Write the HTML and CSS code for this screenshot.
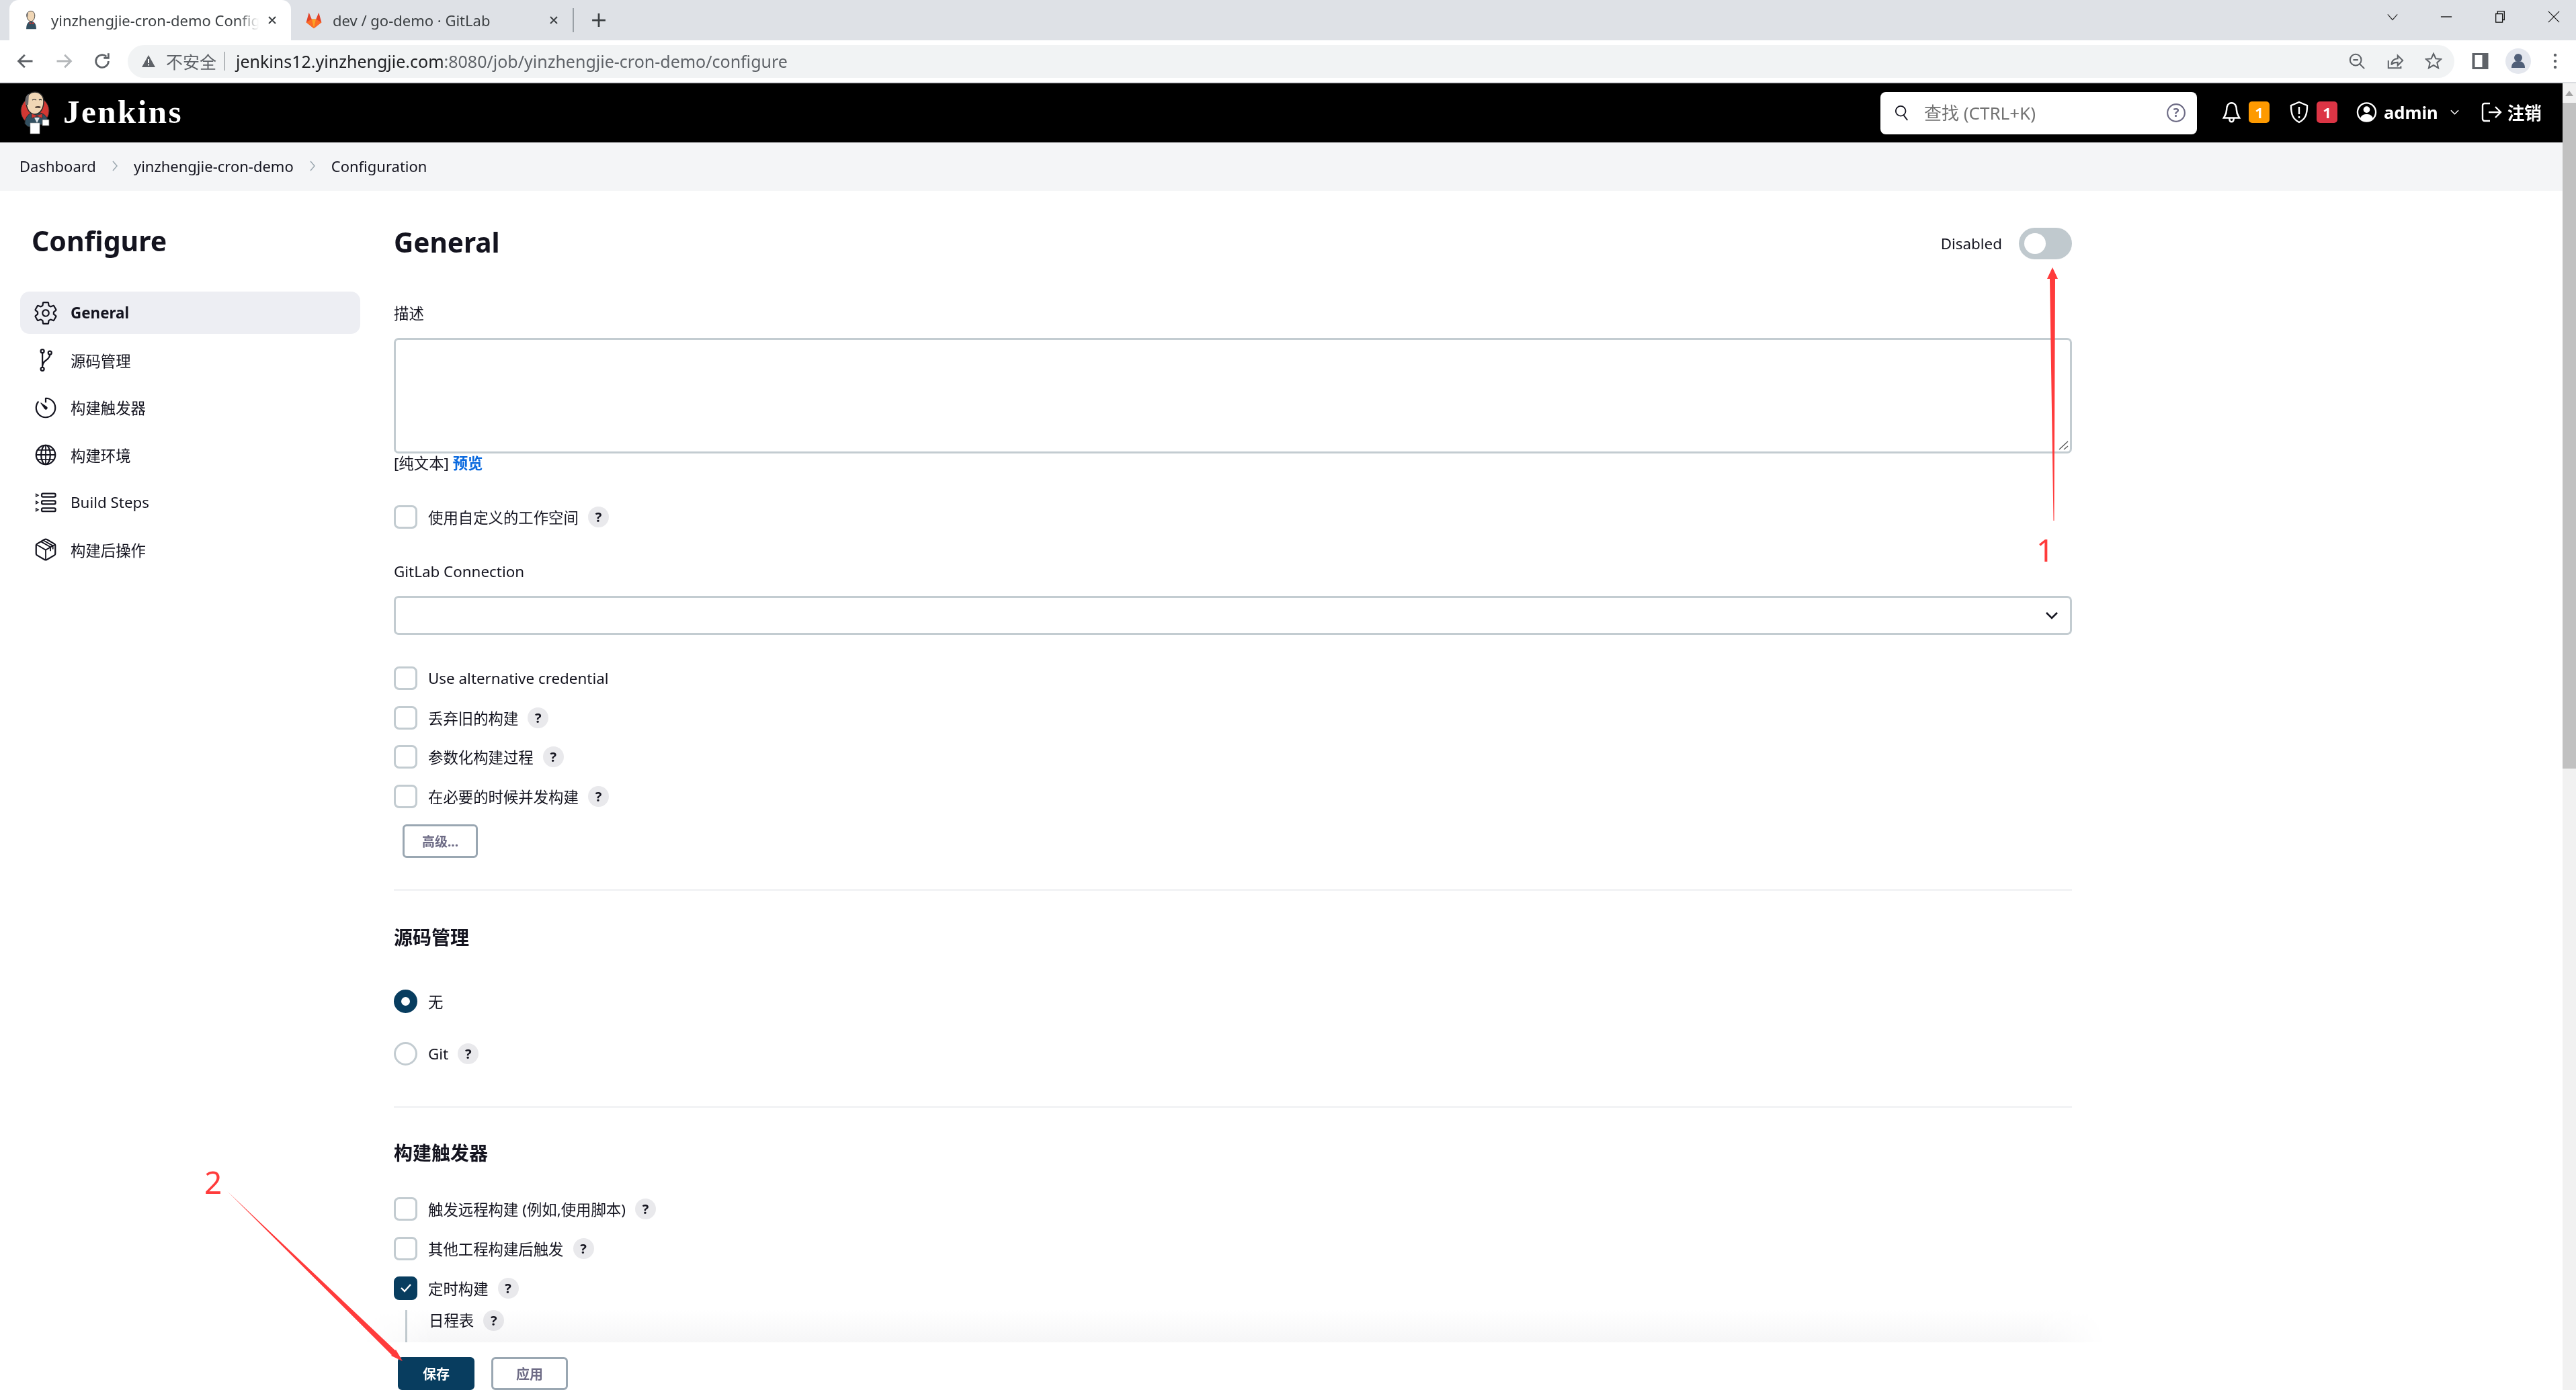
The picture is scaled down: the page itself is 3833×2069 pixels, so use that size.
FILE: index.html
```html
<!DOCTYPE html>
<html lang="en">
<head>
    <meta charset="UTF-8">
    <title>yinzhengjie-cron-demo Config - Jenkins</title>
    <link rel="stylesheet" href="styles.css">
</head>
<body>
    <div class="tabstrip">
        <div class="tab tab-active">
            <svg class="favicon" viewBox="0 0 46 64">
                <path d="M6 62c0-16 6-26 17-26s17 10 17 26z" fill="#335061"/>
                <path d="M8 16C8 6 15 1 22 1s13 6 13 15c0 11-5 20-13 20S8 27 8 16z" fill="#f0d6b5" stroke="#2b2b2b" stroke-width="2"/>
                <path d="M7 20c-2-8 1-14 5-15l-1 15z" fill="#6d6b6d"/>
                <path d="M17 38l7 4 7-4v8l-7-3-7 3z" fill="#d33833"/>
            </svg>
            <span class="tab-title">yinzhengjie-cron-demo Config</span>
            <svg class="tab-close" viewBox="0 0 14 14"><path d="M2 2l10 10M12 2L2 12" stroke="#3c4043" stroke-width="2"/></svg>
        </div>
        <div class="tab">
            <svg class="favicon favicon-gitlab" viewBox="0 0 30 32"><path d="M15 31L1 20 6 2l5 12h8l5-12 5 18z" fill="#e24329"/><path d="M15 31L1 20l10-6z" fill="#fc6d26"/><path d="M15 31l14-11-10-6z" fill="#fc6d26"/><path d="M15 31l-4-17h8z" fill="#fca326"/></svg>
            <span class="tab-title">dev / go-demo · GitLab</span>
            <svg class="tab-close" viewBox="0 0 14 14"><path d="M2 2l10 10M12 2L2 12" stroke="#3c4043" stroke-width="2"/></svg>
        </div>
        <span class="tab-sep"></span>
        <svg class="tab-new" viewBox="0 0 20 20"><path d="M10 1v18M1 10h18" stroke="#3c4043" stroke-width="2.5"/></svg>
        <div class="window-btns">
            <svg viewBox="0 0 20 20"><path d="M2 6l8 9 8-9" fill="none" stroke="#333" stroke-width="1.3"/></svg>
            <svg viewBox="0 0 20 20"><path d="M1 10h18" stroke="#111" stroke-width="1.5"/></svg>
            <svg viewBox="0 0 20 20"><path d="M3 5h11v14H3zM6 5V1h11v14h-3" fill="none" stroke="#111" stroke-width="1.4"/></svg>
            <svg viewBox="0 0 20 20"><path d="M1 1l18 18M19 1L1 19" stroke="#111" stroke-width="1.2"/></svg>
        </div>
    </div>

    <div class="toolbar">
        <svg class="nav-icon" viewBox="0 0 24 24"><path d="M21 12H4M11 4l-8 8 8 8" fill="none" stroke="#5f6368" stroke-width="2.4"/></svg>
        <svg class="nav-icon" viewBox="0 0 24 24"><path d="M3 12h17M13 4l8 8-8 8" fill="none" stroke="#b4b7ba" stroke-width="2.4"/></svg>
        <svg class="nav-icon" viewBox="0 0 24 24"><path d="M20 12a8 8 0 1 1-2.500-5.800M20 2v6h-6" fill="none" stroke="#5f6368" stroke-width="2.4"/></svg>
        <div class="omnibox">
            <svg class="warn-icon" viewBox="0 0 22 20"><path d="M11 1l10 18H1z" fill="#5f6368"/><path d="M10 7h2v6h-2zM10 14.500h2v2h-2z" fill="#fff"/></svg>
            <span class="not-secure">不安全</span>
            <span class="omni-sep"></span>
            <span class="url"><b>jenkins12.yinzhengjie.com</b>:8080/job/yinzhengjie-cron-demo/configure</span>
            <span class="omni-actions">
                <svg viewBox="0 0 28 28"><circle cx="12" cy="12" r="9" fill="none" stroke="#5f6368" stroke-width="2.2"/><path d="M8 12h8M18 18l8 8" stroke="#5f6368" stroke-width="2.2"/></svg>
                <svg viewBox="0 0 28 28"><path d="M3 13v12h20v-3" fill="none" stroke="#5f6368" stroke-width="2.2"/><path d="M8 20c0-7 5-10 10-10V5l8 8-8 8v-5c-4 0-8 0-10 4z" fill="none" stroke="#5f6368" stroke-width="2.2"/></svg>
                <svg viewBox="0 0 28 28"><path d="M14 2l3.600 8 8.400.8-6.300 5.600 1.900 8.600-7.600-4.500L6.400 25l1.900-8.600L2 10.800l8.400-.8z" fill="none" stroke="#5f6368" stroke-width="2.2"/></svg>
            </span>
        </div>
        <div class="toolbar-right">
            <svg class="panel-icon" viewBox="0 0 24 24"><path d="M0 0h24v24H0z" fill="#5f6368"/><path d="M4 3h11v18H4z" fill="#fff"/></svg>
            <span class="avatar"><svg viewBox="0 0 38 38"><circle cx="19" cy="14" r="6" fill="#505f78"/><path d="M9 29c0-7 4-10 10-10s10 3 10 10z" fill="#505f78"/></svg></span>
            <svg class="menu-icon" viewBox="0 0 8 32"><circle cx="4" cy="4" r="3" fill="#5f6368"/><circle cx="4" cy="16" r="3" fill="#5f6368"/><circle cx="4" cy="28" r="3" fill="#5f6368"/></svg>
        </div>
    </div>

    <div class="viewport">
        <div class="page">
            <header class="jenkins-header">
                <svg class="logo" viewBox="0 0 46 64">
                    <circle cx="22" cy="29" r="21" fill="#d33833" stroke="#2b2b2b" stroke-width="1"/>
                    <path d="M7 48c0-10 7-17 15-17 10 0 18 4 19 13l-7 5-6 1v-2l-8 6-9-2z" fill="#335061" stroke="#2b2b2b" stroke-width="1"/>
                    <path d="M9 15C9 6 15 1 22 1s13 5 13 14c0 10-5 19-13 19S9 26 9 15z" fill="#f0d6b5" stroke="#2b2b2b" stroke-width="1.500"/>
                    <path d="M8 20c-2-9 1-15 5-16l-1 16z" fill="#6d6b6d"/>
                    <path d="M18 13q3-2 6 0M28 13q2-2 4 0" fill="none" stroke="#2b2b2b" stroke-width="1.200"/>
                    <path d="M22 23q5-2 9 0l-2 2q-4-1-6 0z" fill="#4a3b33"/>
                    <path d="M17 33l8 3 8-3v7l-8-3-8 3z" fill="#d33833" stroke="#2b2b2b" stroke-width=".6"/>
                    <path d="M21 39h8l-4 8z" fill="#dfe6ea"/>
                    <path d="M15 47h14v16H15z" fill="#fff" stroke="#999" stroke-width=".6"/>
                    <path d="M33 42h10v9H33z" fill="#fff" stroke="#555" stroke-width=".8"/>
                </svg>
                <span class="brand">Jenkins</span>
                <div class="search">
                    <svg class="search-icon" viewBox="0 0 24 28"><circle cx="10" cy="11" r="8" fill="none" stroke="#14141f" stroke-width="2"/><path d="M15 18l6 8" stroke="#14141f" stroke-width="2"/></svg>
                    <span class="search-text">查找 (CTRL+K)</span>
                    <svg class="search-help" viewBox="0 0 28 28"><circle cx="14" cy="14" r="12" fill="none" stroke="#6d6b85" stroke-width="2"/><text x="14" y="20" text-anchor="middle" class="search-q">?</text></svg>
                </div>
                <div class="header-links">
                    <svg class="hd-icon hd-bell" viewBox="0 0 28 32"><path d="M14 3c5 0 7 5 7 10 0 6 3 9 4 11H3c1-2 4-5 4-11 0-5 2-10 7-10zM11 25c0 6 6 6 6 0" fill="none" stroke="#fff" stroke-width="2.400"/></svg>
                    <span class="badge badge-orange">1</span>
                    <svg class="hd-icon hd-shield" viewBox="0 0 30 34"><path d="M15 2l12 5c0 12-2 20-12 25C5 27 3 19 3 7z" fill="none" stroke="#fff" stroke-width="2.400"/><path d="M15 9v11M15 23v3" stroke="#fff" stroke-width="2.400"/></svg>
                    <span class="badge badge-red">1</span>
                    <svg class="hd-icon hd-user" viewBox="0 0 32 32"><circle cx="16" cy="16" r="14" fill="none" stroke="#fff" stroke-width="2.400"/><circle cx="16" cy="12" r="5" fill="#fff"/><path d="M6 26c2-6 6-7 10-7s8 1 10 7c-5 5-15 5-20 0z" fill="#fff"/></svg>
                    <span class="user-name">admin</span>
                    <svg class="user-caret" viewBox="0 0 14 10"><path d="M1 2l6 6 6-6" fill="none" stroke="#fff" stroke-width="1.600"/></svg>
                    <svg class="hd-icon hd-logout" viewBox="0 0 32 32"><path d="M14 3H6a3 3 0 0 0-3 3v20a3 3 0 0 0 3 3h8M12 16h17M22 8l8 8-8 8" fill="none" stroke="#fff" stroke-width="2.400"/></svg>
                    <span class="logout-text">注销</span>
                </div>
            </header>

            <nav class="breadcrumbs">
                <a>Dashboard</a>
                <svg class="crumb-sep" viewBox="0 0 10 18"><path d="M2 2l6 7-6 7" fill="none" stroke="#9ba7af" stroke-width="1.500"/></svg>
                <a>yinzhengjie-cron-demo</a>
                <svg class="crumb-sep" viewBox="0 0 10 18"><path d="M2 2l6 7-6 7" fill="none" stroke="#9ba7af" stroke-width="1.500"/></svg>
                <a>Configuration</a>
            </nav>

            <div class="layout">
                <aside class="sidebar">
                    <h1 class="side-title">Configure</h1>
                    <ul class="side-nav">
                        <li class="side-item active">
                            <svg viewBox="0 0 512 512"><path d="M262.290 192.310a64 64 0 1057.400 57.400 64.130 64.130 0 00-57.400-57.400zM416.390 256a154.340 154.340 0 01-1.530 20.790l45.210 35.460a10.810 10.810 0 012.450 13.750l-42.770 74a10.810 10.810 0 01-13.140 4.590l-44.900-18.080a16.110 16.110 0 00-15.170 1.750A164.480 164.480 0 01325 400.800a15.940 15.940 0 00-8.820 12.140l-6.730 47.890a11.080 11.080 0 01-10.680 9.170h-85.540a11.110 11.110 0 01-10.690-8.870l-6.720-47.820a16.070 16.070 0 00-9-12.220 155.300 155.300 0 01-21.460-12.570 16 16 0 00-15.110-1.710l-44.890 18.070a10.810 10.810 0 01-13.140-4.580l-42.770-74a10.800 10.800 0 012.450-13.750l38.210-30a16.050 16.050 0 006-14.080c-.36-4.170-.58-8.330-.58-12.500s.21-8.270.58-12.350a16 16 0 00-6.070-13.940l-38.190-30A10.810 10.810 0 0149.480 186l42.770-74a10.810 10.810 0 0113.140-4.590l44.900 18.080a16.110 16.110 0 0015.170-1.750A164.480 164.480 0 01187 111.200a15.940 15.940 0 008.820-12.140l6.730-47.890A11.080 11.080 0 01213.230 42h85.540a11.110 11.110 0 0110.690 8.870l6.720 47.820a16.070 16.070 0 009 12.220 155.300 155.300 0 0121.460 12.570 16 16 0 0015.110 1.710l44.890-18.070a10.810 10.810 0 0113.140 4.580l42.770 74a10.800 10.800 0 01-2.450 13.750l-38.210 30a16.050 16.050 0 00-6.050 14.080c.33 4.140.55 8.300.55 12.470z" class="ic"/></svg>
                            General
                        </li>
                        <li class="side-item">
                            <svg viewBox="0 0 512 512"><circle cx="190" cy="76" r="34" class="ic"/><circle cx="190" cy="436" r="34" class="ic"/><circle cx="340" cy="110" r="34" class="ic"/><path d="M190 110v292M340 144c0 120-150 100-150 240" class="ic"/></svg>
                            源码管理
                        </li>
                        <li class="side-item">
                            <svg viewBox="0 0 512 512"><path d="M112.910 128A191.850 191.850 0 0064 254c-1.180 106.350 85.650 193.800 192 194 106.200.2 192-85.830 192-192 0-104.540-83.550-189.610-187.500-192a4.360 4.360 0 00-4.500 4.370V152" class="ic"/><path d="M233.380 278.630l-79-113a8.130 8.130 0 0111.320-11.320l113 79a32.500 32.500 0 01-37.250 53.260 33.210 33.210 0 01-8.070-7.940z" fill="#14141f"/></svg>
                            构建触发器
                        </li>
                        <li class="side-item">
                            <svg viewBox="0 0 512 512"><circle cx="256" cy="256" r="192" class="ic"/><ellipse cx="256" cy="256" rx="92" ry="192" class="ic"/><path d="M256 64v384M64 256h384M96 160h320M96 352h320" class="ic ic-mid"/></svg>
                            构建环境
                        </li>
                        <li class="side-item">
                            <svg viewBox="0 0 512 512"><rect x="176" y="76" width="276" height="66" rx="24" class="ic"/><rect x="176" y="222" width="276" height="66" rx="24" class="ic"/><rect x="176" y="368" width="276" height="66" rx="24" class="ic"/><path d="M62 84l46 26-46 26zM62 230l46 26-46 26zM62 376l46 26-46 26z" class="ic ic-thin"/></svg>
                            Build Steps
                        </li>
                        <li class="side-item">
                            <svg viewBox="0 0 512 512"><path d="M448 341.370V170.610A32 32 0 00432.110 143l-152-88.460a47.940 47.940 0 00-48.240 0L79.890 143A32 32 0 0064 170.610v170.760A32 32 0 0079.890 369l152 88.460a48 48 0 0048.240 0l152-88.460A32 32 0 00448 341.370z" class="ic"/><path d="M69 154l187 110 187-110M256 464V264M160 96l192 110v80M208 70l192 110v70" class="ic ic-mid"/></svg>
                            构建后操作
                        </li>
                    </ul>
                </aside>

                <main class="content">
                    <div class="section-head">
                        <h2 class="page-title">General</h2>
                        <div class="toggle-wrap">
                            <span>Disabled</span>
                            <span class="toggle"><span class="toggle-knob"></span></span>
                        </div>
                    </div>

                    <div class="field-label label-desc">描述</div>
                    <div class="textarea">
                        <svg class="resizer" viewBox="0 0 16 16"><path d="M1 14L14 2M8 14l6-5" stroke="#555" stroke-width="1.300"/></svg>
                    </div>
                    <div class="preview-line">[纯文本] <a class="preview-link">预览</a></div>

                    <div class="check-row row-workspace">
                        <span class="check"></span><span>使用自定义的工作空间</span><span class="help">?</span>
                    </div>

                    <div class="field-label label-gitlab">GitLab Connection</div>
                    <div class="select">
                        <svg class="select-caret" viewBox="0 0 20 12"><path d="M2 2l8 8 8-8" fill="none" stroke="#14141f" stroke-width="2.600"/></svg>
                    </div>

                    <div class="check-list">
                        <div class="check-row"><span class="check"></span><span>Use alternative credential</span></div>
                        <div class="check-row"><span class="check"></span><span>丢弃旧的构建</span><span class="help">?</span></div>
                        <div class="check-row"><span class="check"></span><span>参数化构建过程</span><span class="help">?</span></div>
                        <div class="check-row"><span class="check"></span><span>在必要的时候并发构建</span><span class="help">?</span></div>
                    </div>
                    <button class="btn btn-advanced">高级...</button>

                    <hr class="divider divider-first">

                    <h3 class="section-title">源码管理</h3>
                    <div class="check-row row-none"><span class="radio radio-on"></span><span>无</span></div>
                    <div class="check-row row-git"><span class="radio"></span><span>Git</span><span class="help">?</span></div>

                    <hr class="divider divider-second">

                    <h3 class="section-title title-triggers">构建触发器</h3>
                    <div class="check-list trigger-list">
                        <div class="check-row"><span class="check"></span><span>触发远程构建 (例如,使用脚本)</span><span class="help">?</span></div>
                        <div class="check-row"><span class="check"></span><span>其他工程构建后触发</span><span class="help">?</span></div>
                        <div class="check-row">
                            <span class="check check-on"><svg viewBox="0 0 20 20"><path d="M3 10l5 5 9-10" fill="none" stroke="#fff" stroke-width="2.400"/></svg></span>
                            <span>定时构建</span><span class="help">?</span>
                        </div>
                    </div>
                    <div class="nested">
                        <span>日程表</span><span class="help">?</span>
                    </div>
                </main>
            </div>

            <div class="action-bar">
                <div class="action-fade"></div>
                <div class="action-btns">
                    <button class="btn btn-save">保存</button>
                    <button class="btn btn-apply">应用</button>
                </div>
            </div>
        </div>
        <div class="scrollbar">
            <svg class="scroll-up" viewBox="0 0 14 10"><path d="M7 1l6 8H1z" fill="#a3a3a3"/></svg>
            <div class="scroll-thumb"></div>
        </div>
    </div>

    <!-- red annotations drawn on top of the screenshot -->
    <svg class="annotations" viewBox="0 0 3833 2069">
        <path d="M3054 398l8 17h-4l-1.500 360h-1L3050 415h-4z" fill="#ff3b3b"/>
        <path d="M338 1773L588 2010l1-1 10 17-17-8 1-1z" fill="#ff3b3b"/>
    </svg>
    <span class="mark mark-one">1</span>
    <span class="mark mark-two">2</span>
</body>
</html>
```

FILE: styles.css
```css
* {
    box-sizing: border-box;
}
html, body {
    margin: 0;
    padding: 0;
    height: 2069px;
    overflow: hidden;
    background: #fff;
}
body {
    font-family: "Noto Sans", "Noto Sans CJK SC", sans-serif;
    font-size: 22.4px;
    color: #14141f;
    position: relative;
}
svg {
    display: block;
    flex-shrink: 0;
}

/* browser chrome */
.tabstrip {
    height: 60px;
    background: #dee1e6;
    display: flex;
    align-items: center;
    padding-left: 14px;
    font-size: 22px;
    color: #3c4043;
}
.tab {
    width: 419px;
    height: 60px;
    display: flex;
    align-items: center;
    padding-left: 20px;
    border-radius: 14px 14px 0 0;
}
.tab-active {
    background: #fff;
}
.favicon {
    width: 25px;
    height: 28px;
    margin-right: 17px;
}
.favicon-gitlab {
    width: 28px;
    height: 26px;
    margin-right: 14px;
}
.tab-title {
    width: 309px;
    white-space: nowrap;
    overflow: hidden;
}
.tab-active .tab-title {
    -webkit-mask-image: linear-gradient(90deg, #000 90%, transparent);
}
.tab-close {
    width: 14px;
    height: 14px;
    margin-left: 13px;
}
.tab-sep {
    width: 2px;
    height: 36px;
    background: #9aa0a6;
}
.tab-new {
    width: 22px;
    height: 22px;
    margin-left: 26px;
}
.window-btns {
    margin-left: auto;
    display: flex;
    gap: 62px;
    padding-right: 24px;
    margin-top: -10px;
}
.window-btns svg {
    width: 18px;
    height: 18px;
}
.toolbar {
    height: 64px;
    background: #fff;
    display: flex;
    align-items: center;
    padding-left: 24px;
    border-bottom: 2px solid #dadce0;
}
.nav-icon {
    width: 28px;
    height: 28px;
    margin-right: 29px;
}
.omnibox {
    width: 3462px;
    height: 49px;
    margin-left: -5px;
    background: #f1f3f4;
    border-radius: 25px;
    display: flex;
    align-items: center;
    padding-left: 20px;
    font-size: 25px;
    color: #5f6368;
}
.warn-icon {
    width: 22px;
    height: 20px;
    margin-right: 15px;
}
.omni-sep {
    width: 1px;
    height: 28px;
    background: #80868b;
    margin: 0 16px 0 12px;
}
.url b {
    font-weight: 400;
    color: #202124;
}
.omni-actions {
    margin-left: auto;
    display: flex;
    gap: 31px;
    padding-right: 18px;
}
.omni-actions svg {
    width: 26px;
    height: 26px;
}
.toolbar-right {
    flex: 1;
    display: flex;
    align-items: center;
    padding-left: 26px;
    gap: 25px;
}
.panel-icon {
    width: 25px;
    height: 24px;
}
.avatar {
    width: 38px;
    height: 38px;
    border-radius: 50%;
    background: #e4e7ee;
    display: block;
}
.avatar svg {
    width: 38px;
    height: 38px;
}
.menu-icon {
    width: 6px;
    height: 24px;
    margin-left: 8px;
}

/* page area */
.viewport {
    display: flex;
    height: 1945px;
}
.page {
    flex: 1;
    position: relative;
    min-width: 0;
}
.scrollbar {
    width: 20px;
    background: #f1f1f1;
}
.scroll-up {
    width: 14px;
    height: 10px;
    margin: 10px auto 9px;
}
.scroll-thumb {
    height: 991px;
    background: #c1c1c1;
}

.jenkins-header {
    height: 88px;
    background: #000;
    color: #fff;
    display: flex;
    align-items: center;
    padding-left: 30px;
}
.logo {
    width: 46px;
    height: 64px;
}
.brand {
    font-family: "Liberation Serif", serif;
    font-weight: 700;
    font-size: 49px;
    margin: -3px 0 0 18px;
    letter-spacing: 2.500px;
}
.search {
    margin-left: auto;
    width: 471px;
    height: 63px;
    background: #fff;
    border-radius: 8px;
    display: flex;
    align-items: center;
    padding: 0 16px 0 21px;
    font-size: 26px;
}
.search-icon {
    width: 22px;
    height: 26px;
    margin-right: 22px;
}
.search-text {
    flex: 1;
    color: #737373;
    margin-top: -2px;
}
.search-help {
    width: 30px;
    height: 30px;
}
.search-q {
    font-size: 17px;
    font-weight: 700;
    fill: #6d6b85;
}
.header-links {
    display: flex;
    align-items: center;
    width: 544px;
    padding: 0 0 2px 36px;
    font-size: 25.600px;
    font-weight: 700;
}
.hd-icon {
    height: 34px;
}
.hd-bell, .hd-user {
    width: 31px;
}
.hd-shield {
    width: 34px;
}
.hd-logout {
    width: 32px;
}
.badge {
    width: 31px;
    height: 32px;
    border-radius: 5px;
    text-align: center;
    line-height: 32px;
    font-size: 22px;
}
.badge-orange {
    background: #fe9a00;
    margin: 0 27px 0 10px;
}
.badge-red {
    background: #dc3545;
    margin: 0 28px 0 9px;
}
.user-name {
    margin-left: 10px;
}
.user-caret {
    width: 13px;
    height: 10px;
    margin: 0 32px 0 18px;
}
.logout-text {
    margin-left: 8px;
}
.breadcrumbs {
    height: 72px;
    background: #f4f5f7;
    display: flex;
    align-items: center;
    padding: 0 0 2px 29px;
    font-size: 22px;
}
.crumb-sep {
    width: 10px;
    height: 18px;
    margin: 0 23px;
}

.layout {
    display: flex;
    padding-left: 30px;
}
.sidebar {
    width: 506px;
    margin-right: 50px;
}
.side-title {
    margin: 44px 0 46px 17px;
    font-size: 41px;
    line-height: 60px;
    font-weight: 700;
}
.side-nav {
    list-style: none;
    margin: 0;
    padding: 0;
    display: flex;
    flex-direction: column;
    gap: 7.500px;
}
.side-item {
    height: 63px;
    display: flex;
    align-items: center;
    gap: 18px;
    padding-left: 19px;
    border-radius: 14px;
}
.side-item svg {
    width: 38px;
    height: 38px;
}
.side-item.active {
    background: #edeef3;
    font-weight: 700;
}
.ic {
    fill: none;
    stroke: #14141f;
    stroke-width: 30;
}
.ic-mid {
    stroke-width: 24;
}
.ic-thin {
    stroke-width: 18;
}

.content {
    width: 2497px;
}
.section-head {
    margin-top: 55px;
    height: 47px;
    display: flex;
    align-items: center;
    justify-content: space-between;
}
.page-title {
    margin: -4px 0 0;
    font-size: 40.500px;
    font-weight: 700;
}
.toggle-wrap {
    display: flex;
    align-items: center;
    gap: 25px;
}
.toggle {
    width: 79px;
    height: 47px;
    border-radius: 24px;
    background: #c0c9ce;
    padding: 8px;
}
.toggle-knob {
    display: block;
    width: 32px;
    height: 31px;
    border-radius: 50%;
    background: #fff;
}
.field-label {
    line-height: 32px;
}
.label-desc {
    margin-top: 65px;
}
.label-gitlab {
    margin-top: 48px;
}
.textarea {
    margin-top: 20px;
    height: 172px;
    border: 3px solid #c3ccd1;
    border-radius: 7px;
    display: flex;
    justify-content: flex-end;
    align-items: flex-end;
}
.resizer {
    width: 16px;
    height: 16px;
    margin: 0 1px 1px 0;
}
.preview-line {
    line-height: 30px;
}
.preview-link {
    color: #0b6adf;
    font-weight: 700;
}
.check-row {
    display: flex;
    align-items: center;
    height: 35px;
    gap: 16px;
}
.row-workspace {
    margin-top: 47px;
}
.check, .radio {
    width: 35px;
    height: 35px;
    border: 3px solid #c3ccd1;
    border-radius: 8px;
    background: #fff;
    display: flex;
    align-items: center;
    justify-content: center;
}
.radio {
    border-radius: 50%;
}
.radio-on {
    border: 11px solid #083d5f;
}
.check-on {
    background: #083d5f;
    border-color: #083d5f;
}
.check-on svg {
    width: 20px;
    height: 20px;
}
.help {
    width: 31px;
    height: 31px;
    margin-left: -2px;
    border-radius: 50%;
    background: #e9e9ec;
    text-align: center;
    line-height: 31px;
    font-size: 20px;
    font-weight: 700;
}
.select {
    margin-top: 20px;
    height: 58px;
    border: 3px solid #c3ccd1;
    border-radius: 7px;
    display: flex;
    justify-content: flex-end;
    align-items: center;
    padding-right: 17px;
}
.select-caret {
    width: 20px;
    height: 12px;
}
.check-list {
    margin-top: 47px;
    display: flex;
    flex-direction: column;
    gap: 23.600px;
}
.trigger-list {
    margin-top: 46px;
    gap: 24px;
}
.btn {
    font-family: inherit;
    font-weight: 700;
    background: #fff;
    border: 3px solid #9aa7b2;
    border-radius: 6px;
    color: #6d6b85;
    padding: 0;
    font-size: 19px;
}
.btn-advanced {
    display: block;
    margin: 24px 0 0 13px;
    width: 112px;
    height: 50px;
}
.divider {
    border: 0;
    height: 3px;
    margin: 0;
    background: #f2f3f5;
}
.divider-first {
    margin-top: 46px;
}
.divider-second {
    margin-top: 60px;
}
.section-title {
    margin: 49px 0 0;
    font-size: 28px;
    line-height: 40px;
    font-weight: 700;
}
.title-triggers {
    margin-top: 47px;
}
.row-none {
    margin-top: 58px;
}
.row-git {
    margin-top: 43px;
}
.nested {
    margin: 15px 0 0 17px;
    padding-left: 32px;
    border-left: 3px solid #c3ccd1;
    height: 60px;
    line-height: 32px;
    display: flex;
    align-items: flex-start;
    gap: 16px;
}

/* sticky save bar */
.action-bar {
    position: absolute;
    left: 540px;
    right: 680px;
    bottom: 0;
    height: 119px;
}
.action-fade {
    height: 48px;
    background: linear-gradient(#fff, #f6f6f7);
    mix-blend-mode: multiply;
    -webkit-mask-image: linear-gradient(90deg, transparent, #000 4%, #000 96%, transparent);
}
.action-btns {
    height: 71px;
    background: #fff;
    display: flex;
    gap: 25px;
    padding: 22px 0 0 52px;
}
.btn-save, .btn-apply {
    height: 49px;
    width: 114px;
    font-size: 20px;
}
.btn-save {
    background: #083d5f;
    border-color: #083d5f;
    color: #fff;
}

/* annotations */
.annotations {
    position: absolute;
    left: 0;
    top: 0;
    width: 3833px;
    height: 2069px;
    pointer-events: none;
}
.mark {
    position: absolute;
    color: #ff3b3b;
    font-size: 46px;
    line-height: 46px;
}
.mark-one {
    left: 3030px;
    top: 795px;
}
.mark-two {
    left: 304px;
    top: 1736px;
}
```
